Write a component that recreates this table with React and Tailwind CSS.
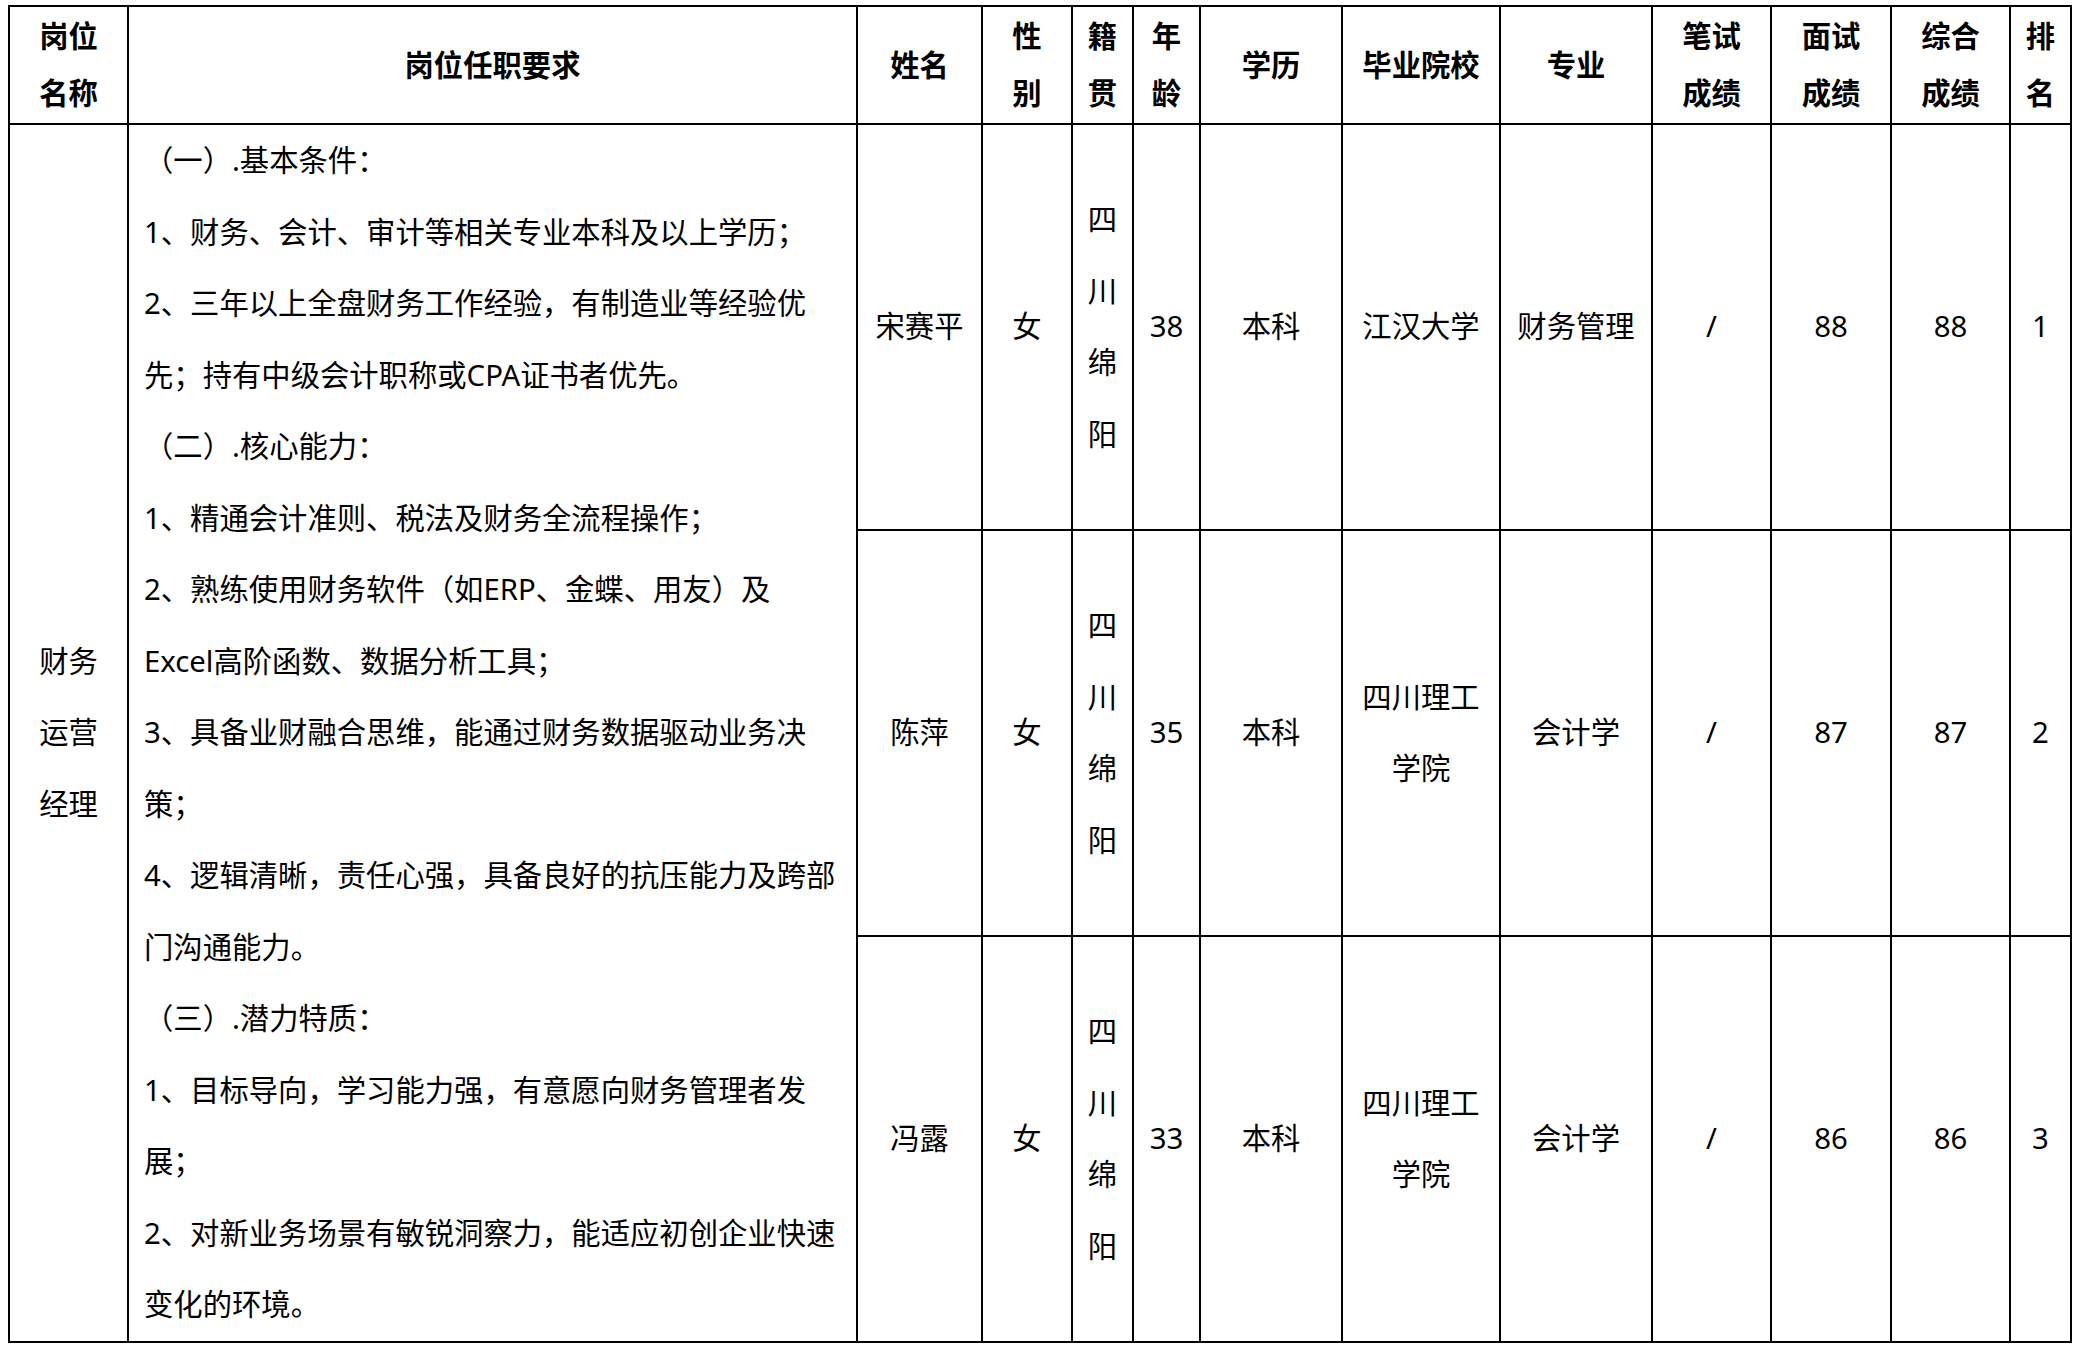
import React from "react";

const headers = [
  ["岗位", "名称"],
  ["岗位任职要求"],
  ["姓名"],
  ["性", "别"],
  ["籍", "贯"],
  ["年", "龄"],
  ["学历"],
  ["毕业院校"],
  ["专业"],
  ["笔试", "成绩"],
  ["面试", "成绩"],
  ["综合", "成绩"],
  ["排", "名"],
];

const reqLines = [
  "（一）.基本条件：",
  "1、财务、会计、审计等相关专业本科及以上学历；",
  "2、三年以上全盘财务工作经验，有制造业等经验优",
  "先；持有中级会计职称或CPA证书者优先。",
  "（二）.核心能力：",
  "1、精通会计准则、税法及财务全流程操作；",
  "2、熟练使用财务软件（如ERP、金蝶、用友）及",
  "Excel高阶函数、数据分析工具；",
  "3、具备业财融合思维，能通过财务数据驱动业务决",
  "策；",
  "4、逻辑清晰，责任心强，具备良好的抗压能力及跨部",
  "门沟通能力。",
  "（三）.潜力特质：",
  "1、目标导向，学习能力强，有意愿向财务管理者发",
  "展；",
  "2、对新业务场景有敏锐洞察力，能适应初创企业快速",
  "变化的环境。",
];

const rows = [
  { name: "宋赛平", school: ["江汉大学"], major: "财务管理", age: "38", score: "88", rank: "1" },
  { name: "陈萍", school: ["四川理工", "学院"], major: "会计学", age: "35", score: "87", rank: "2" },
  { name: "冯露", school: ["四川理工", "学院"], major: "会计学", age: "33", score: "86", rank: "3" },
];

function Cell({ lines, className = "" }) {
  return (
    <div className={"bg-white flex flex-col items-center justify-center text-center leading-[71.5px] " + className}>
      {lines.map((l, i) => (
        <div key={i} className="whitespace-nowrap">{l}</div>
      ))}
    </div>
  );
}

export default function App() {
  return (
    <div className="min-h-screen bg-white pl-[8px] pt-[5px] text-black text-[29.33px] font-['Noto_Sans','Noto_Sans_CJK_SC',sans-serif]">
      <div className="inline-grid bg-black p-[2px] gap-[2px] grid-cols-[117px_727px_123px_88px_59px_65px_140px_156px_150px_117px_118px_117px_59px] grid-rows-[116px_404px_404px_404px]">
        {headers.map((h, i) => (
          <div key={i} className="bg-white flex flex-col items-center justify-center text-center font-bold leading-[57px]">
            {h.map((l, j) => (
              <div key={j} className="whitespace-nowrap">{l}</div>
            ))}
          </div>
        ))}

        <div className="bg-white row-span-3 col-start-1 row-start-2 flex flex-col items-center justify-center leading-[71.5px]">
          <div>财务</div>
          <div>运营</div>
          <div>经理</div>
        </div>

        <div className="bg-white row-span-3 col-start-2 row-start-2 flex flex-col justify-center pl-[15px] leading-[71.5px]">
          {reqLines.map((l, i) => (
            <div key={i} className="whitespace-nowrap">{l}</div>
          ))}
        </div>

        {rows.map((r, i) => (
          <React.Fragment key={i}>
            <Cell lines={[r.name]} />
            <Cell lines={["女"]} />
            <Cell lines={["四", "川", "绵", "阳"]} />
            <Cell lines={[r.age]} />
            <Cell lines={["本科"]} />
            <Cell lines={r.school} />
            <Cell lines={[r.major]} />
            <Cell lines={["/"]} />
            <Cell lines={[r.score]} />
            <Cell lines={[r.score]} />
            <Cell lines={[r.rank]} />
          </React.Fragment>
        ))}
      </div>
    </div>
  );
}
